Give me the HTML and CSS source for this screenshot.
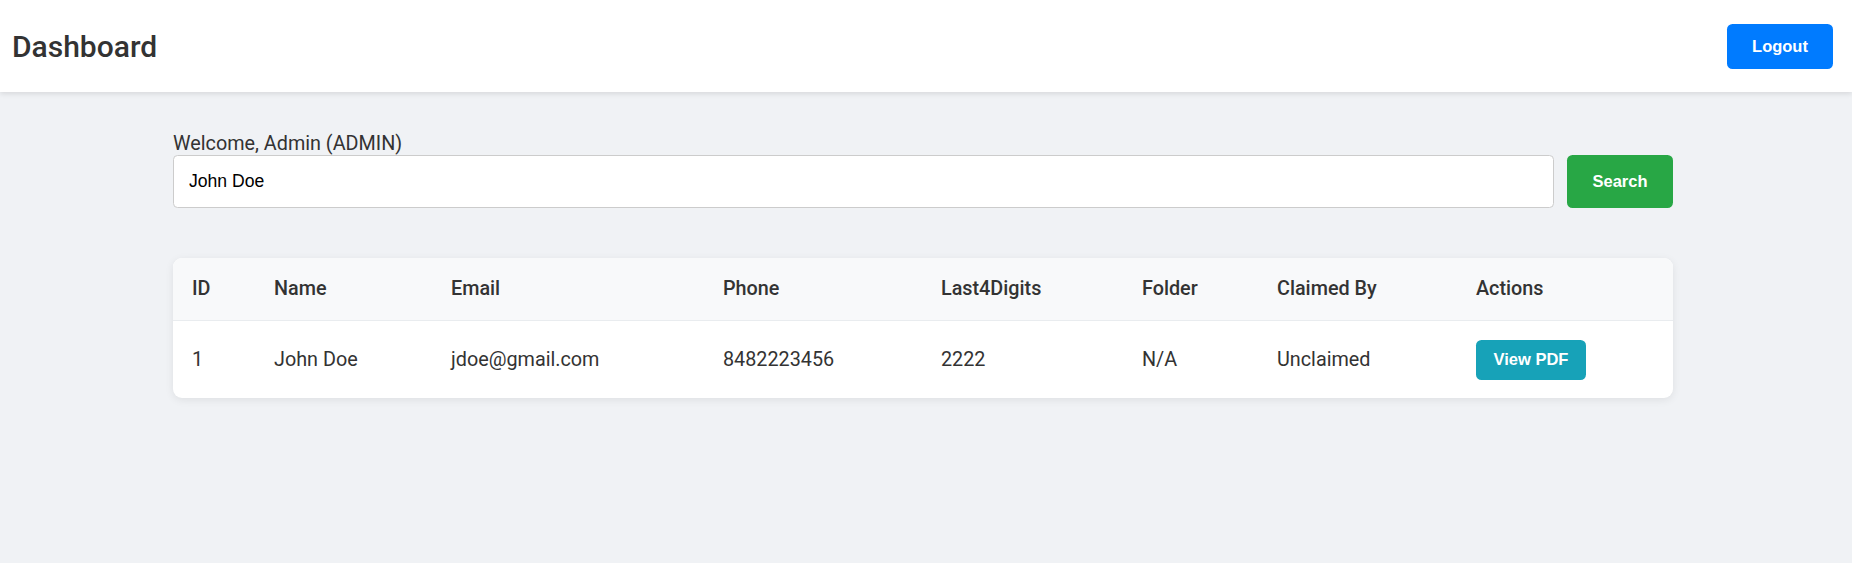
FILE: index.html
```html
<!DOCTYPE html>
<html lang="en">
<head>
<meta charset="utf-8">
<title>Dashboard</title>
<link rel="stylesheet" href="styles.css">
</head>
<body>
<header class="topbar">
  <h1 class="title">Dashboard</h1>
  <button class="btn btn-logout">Logout</button>
</header>
<main class="content">
  <div class="welcome">Welcome, Admin (ADMIN)</div>
  <form class="search-row" onsubmit="return false;">
    <input class="search-input" type="text" value="John Doe">
    <button class="btn btn-search" type="submit">Search</button>
  </form>
  <div class="card">
    <table class="data-table">
      <colgroup>
        <col class="c-id"><col class="c-name"><col class="c-email"><col class="c-phone">
        <col class="c-last"><col class="c-folder"><col class="c-claimed"><col class="c-actions">
      </colgroup>
      <thead>
        <tr>
          <th>ID</th><th>Name</th><th>Email</th><th>Phone</th><th>Last4Digits</th><th>Folder</th><th>Claimed By</th><th>Actions</th>
        </tr>
      </thead>
      <tbody>
        <tr>
          <td>1</td><td>John Doe</td><td>jdoe@gmail.com</td><td>8482223456</td><td>2222</td><td>N/A</td><td>Unclaimed</td>
          <td><button class="btn btn-view">View PDF</button></td>
        </tr>
      </tbody>
    </table>
  </div>
</main>
</body>
</html>
```

FILE: styles.css
```css
* { box-sizing: border-box; }

html, body {
  margin: 0;
  padding: 0;
}

body {
  background: #f0f2f5;
  font-family: Roboto, "Liberation Sans", Arial, sans-serif;
  color: #333;
  min-height: 563px;
}

.topbar {
  height: 92px;
  background: #fff;
  display: flex;
  align-items: center;
  justify-content: space-between;
  padding: 0 19px 0 12px;
  box-shadow: 0 2px 5px rgba(0, 0, 0, 0.1);
}

.title {
  margin: 0;
  font-size: 30px;
  font-weight: 500;
  color: #333;
}

.btn {
  font-family: "Liberation Sans", Arial, sans-serif;
  font-weight: bold;
  font-size: 16.5px;
  color: #fff;
  border: none;
  border-radius: 5.5px;
  cursor: pointer;
}

.btn-logout {
  background: #007bff;
  width: 106px;
  height: 45px;
  padding: 0;
  margin-top: 1px;
}

.content {
  padding: 40px 179px 0 173px;
}

.welcome {
  font-size: 19.8px;
  line-height: 23px;
}

.search-row {
  display: flex;
  gap: 13px;
  margin: 0;
  height: 53px;
}

.search-input {
  flex: 1;
  height: 53px;
  border: 1px solid #ccc;
  border-radius: 4.5px;
  background: #fff;
  font-family: "Liberation Sans", Arial, sans-serif;
  font-size: 17.6px;
  color: #000;
  padding: 0 15px;
  outline: none;
}

.btn-search {
  background: #28a745;
  width: 106px;
  height: 53px;
  padding: 0;
}

.card {
  margin-top: 50px;
  background: #fff;
  border-radius: 9px;
  box-shadow: 0 2px 8px rgba(0, 0, 0, 0.08);
  overflow: hidden;
}

.data-table {
  width: 100%;
  border-collapse: collapse;
  table-layout: fixed;
  font-size: 19.8px;
}

.c-id { width: 82px; }
.c-name { width: 177px; }
.c-email { width: 272px; }
.c-phone { width: 218px; }
.c-last { width: 201px; }
.c-folder { width: 135px; }
.c-claimed { width: 199px; }
.c-actions { width: 216px; }

.data-table th {
  background: #f8f9fa;
  text-align: left;
  font-weight: 500;
  height: 62px;
  padding: 0 19px;
  border-bottom: 1px solid #e9ecef;
  line-height: 23px;
}

.data-table td {
  height: 78px;
  padding: 1px 19px 0;
  line-height: 23px;
}

.btn-view {
  background: #17a2b8;
  width: 110px;
  height: 40px;
  padding: 0;
}
```
